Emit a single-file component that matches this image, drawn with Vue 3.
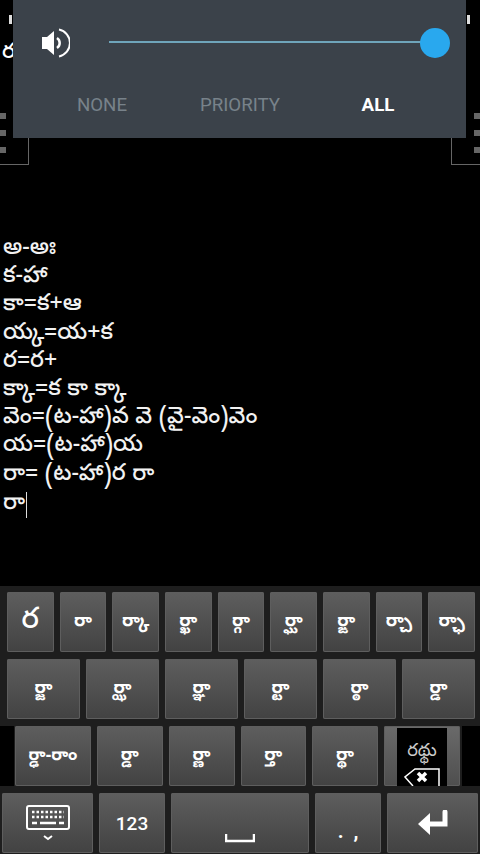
<script setup>
const lines = ['అ-అః','క-హా','కా=క+ఆ','య్క=య+క','ర=ర+','క్కా=క కా క్కా','వెం=(ట-హా)వ వె (వై-వెం)వెం','య=(ట-హా)య','రా= (ట-హా)ర రా']
const row1 = ['ర','రా','ర్కా','ర్ఖా','ర్గా','ర్ఘా','ర్ఙా','ర్చా','ర్ఛా']
const row2 = ['ర్జా','ర్ఝా','ర్ఞా','ర్టా','ర్ఠా','ర్డా']
const row3 = ['ర్ఢా-రాం','ర్డా','ర్ణా','ర్తా','ర్థా']
</script>

<template>
  <div class="screen">
    <div class="under">
      <span class="peek-glyph">ర</span>
      <span class="signal left"></span>
      <span class="signal right"></span>
      <span class="bracket left"><i></i><i></i><i></i></span>
      <span class="bracket right"><i></i><i></i><i></i></span>
    </div>

    <section class="panel">
      <div class="volume">
        <svg class="speaker" viewBox="0 0 28 30" width="28" height="30">
          <path d="M0 9h5l7-6v24l-7-6H0z" fill="#fff" />
          <path d="M15 10a6 6 0 0 1 0 10" fill="none" stroke="#fff" stroke-width="2.500" />
          <path d="M17 1.500a13.800 13.800 0 0 1 0 27" fill="none" stroke="#fff" stroke-width="2" />
        </svg>
        <div class="track"><span class="thumb"></span></div>
      </div>
      <div class="modes">
        <span>NONE</span>
        <span>PRIORITY</span>
        <span class="on">ALL</span>
      </div>
    </section>

    <main class="editor">
      <div v-for="l in lines" :key="l" class="line">{{ l }}</div>
      <div class="line last">రా<span class="caret"></span></div>
    </main>

    <section class="keyboard">
      <div class="row r1">
        <button v-for="(k, i) in row1" :key="k" class="key" :class="{ big: i === 0 }">{{ k }}</button>
      </div>
      <div class="row r2">
        <button v-for="k in row2" :key="k" class="key">{{ k }}</button>
      </div>
      <div class="row r3">
        <button v-for="(k, i) in row3" :key="k" class="key" :class="{ wide: i === 0 }">{{ k }}</button>
        <button class="key del">
          <span class="del-box">
            <span class="del-top">రథ్థు</span>
            <svg viewBox="0 0 36 18" width="36" height="18">
              <path d="M35 19V1H11L1 9l8 9" fill="#000" stroke="#fff" stroke-width="1.500" />
              <path d="M14 5l8 8M22 5l-8 8" stroke="#fff" stroke-width="3.500" />
            </svg>
          </span>
        </button>
      </div>
      <div class="row r4">
        <button class="key kb">
          <svg viewBox="0 0 44 36" width="44" height="36">
            <rect x="1" y="1" width="42" height="23" rx="2" fill="none" stroke="#fff" stroke-width="2" />
            <path d="M6 7h32M6 12h32" stroke="#fff" stroke-width="2.500" stroke-dasharray="2.500 2" />
            <path d="M6 18h5M14 18h16M33 18h5" stroke="#fff" stroke-width="2.500" />
            <path d="M18 31l4 3 4-3" fill="none" stroke="#fff" stroke-width="2" />
          </svg>
        </button>
        <button class="key num">123</button>
        <button class="key space">
          <svg viewBox="0 0 30 10" width="30" height="10">
            <path d="M1 1v7h28V1" fill="none" stroke="#fff" stroke-width="2.500" />
          </svg>
        </button>
        <button class="key punct">.&nbsp;&nbsp;,</button>
        <button class="key enter">
          <svg viewBox="0 0 32 26" width="32" height="26">
            <path d="M28 2v12H12" fill="none" stroke="#fff" stroke-width="5" stroke-linecap="round" />
            <path d="M1 14l12-11v22z" fill="#fff" />
          </svg>
        </button>
      </div>
    </section>
  </div>
</template>

<style>
html, body { margin: 0; background: #000; }
</style>

<style scoped>
.screen {
  position: relative;
  width: 480px;
  height: 854px;
  overflow: hidden;
  background: #000;
  color: #fff;
  font-family: "Noto Sans Telugu", "Noto Sans", Roboto, sans-serif;
  display: flex;
  flex-direction: column;
}
.under { position: absolute; inset: 0; pointer-events: none; }
.peek-glyph { position: absolute; left: 2px; top: 41px; font-size: 22px; line-height: 26px; font-weight: 500; }
.signal { position: absolute; top: 15px; height: 9px; background: #ddd; width: 3px; }
.signal.left { left: 9px; }
.signal.right { left: 467px; }
.bracket {
  position: absolute;
  top: 101px;
  width: 29px;
  height: 64px;
  border-bottom: 1px solid #666;
  display: flex;
  flex-direction: column;
  gap: 11px;
  padding-top: 12px;
  box-sizing: border-box;
}
.bracket i { display: block; width: 6px; height: 6px; background: #666; }
.bracket.left { left: 0; border-right: 1px solid #666; }
.bracket.right { right: 0; border-left: 1px solid #666; align-items: flex-end; }

.panel {
  position: absolute;
  left: 13px;
  top: 0;
  width: 453px;
  height: 138px;
  background: #3b424a;
  box-sizing: border-box;
  z-index: 2;
}
.volume { display: flex; align-items: center; height: 86px; padding: 0 17px 0 29px; }
.speaker { flex: none; }
.track {
  flex: 1;
  margin-left: 39px;
  height: 2px;
  background: #6fa5bb;
  position: relative;
  top: -1px;
}
.thumb {
  position: absolute;
  right: -1px;
  top: -13px;
  width: 30px;
  height: 30px;
  border-radius: 50%;
  background: #29a8ee;
}
.modes {
  display: grid;
  grid-template-columns: repeat(3, 138px);
  margin-top: 7px;
  padding-left: 20px;
  text-align: center;
  font-family: Roboto, sans-serif;
  font-size: 18.700px;
  line-height: 24px;
  color: #78828a;
}
.modes .on { color: #fff; font-weight: 700; }

.editor {
  padding-top: 236px;
  padding-left: 3px;
  font-size: 23.100px;
  font-weight: 500;
  color: #f2f2f2;
}
.line { height: 28.200px; line-height: 28.200px; white-space: nowrap; }
.last { position: relative; display: flex; align-items: center; margin-top: 1px; }
.caret { display: block; width: 1px; height: 26px; background: #ddd; margin-left: 1px; }

.keyboard {
  margin-top: auto;
  height: 268px;
  background: #1e1e1e;
  box-sizing: border-box;
  padding-top: 6px;
  display: flex;
  flex-direction: column;
  gap: 7px;
}
.row { display: flex; gap: 6px; height: 60px; }
.r1, .r2 { padding: 0 5px 0 7px; }
.r3 { padding: 0 20px 0 15px; box-shadow: inset 14px 0 0 #000, inset -18px 0 0 #000; }
.r4 { padding: 0 2px; }
.key {
  flex: 1 1 0;
  min-width: 0;
  border: 0;
  padding: 0;
  margin: 0;
  color: #fff;
  font: inherit;
  font-size: 18px;
  font-weight: 700;
  border-radius: 2px;
  background: linear-gradient(#5e5e5e, #424242);
  box-shadow: inset 0 0 0 1px #5e5e5e;
  display: flex;
  align-items: center;
  justify-content: center;
  white-space: nowrap;
  overflow: hidden;
}
.big { font-size: 29px; font-weight: 500; }
.wide { flex: 0 0 76px; font-size: 17px; }
.del { flex: 0 0 76px; background: linear-gradient(#6a6a6a, #4e4e4e); align-items: stretch; }
.del-box {
  width: 50px;
  background: #000;
  display: flex;
  flex-direction: column;
  align-items: center;
  justify-content: flex-end;
  overflow: hidden;
  margin-top: 2px;
}
.del-top { font-size: 18px; font-weight: 400; color: #ccc; line-height: 30px; }
.kb { flex: 0 0 91px; }
.num { flex: 0 0 66px; font-family: Roboto, sans-serif; font-size: 19px; font-weight: 500; }
.space { flex: 0 0 138px; align-items: flex-end; padding-bottom: 10px; }
.punct { flex: 0 0 66px; align-items: flex-end; padding-bottom: 10px; font-family: Roboto, sans-serif; font-size: 20px; }
.enter { flex: 0 0 91px; }
</style>
